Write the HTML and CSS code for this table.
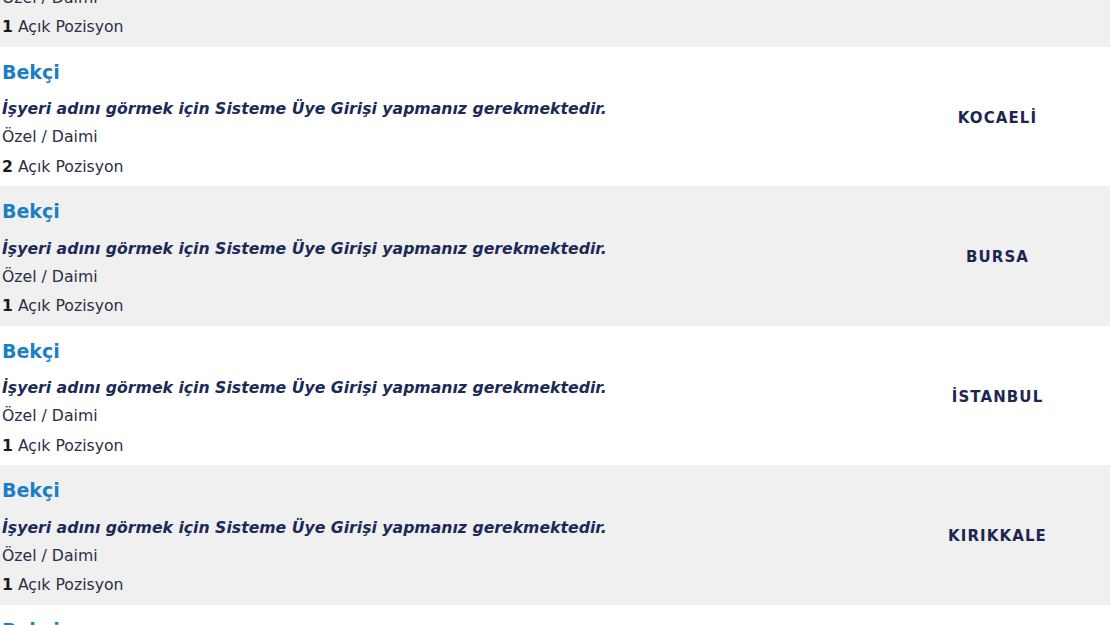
FILE: index.html
```html
<!DOCTYPE html>
<html lang="tr">
<head>
<meta charset="UTF-8">
<title>İş İlanları</title>
<link rel="stylesheet" href="styles.css">
</head>
<body>
<div class="job-list">
  <!-- One row per job post -->
  <div class="job-row gray">
    <div class="job-info">
      <a class="job-title" href="#">Bekçi</a>
      <div class="job-employer">İşyeri adını görmek için Sisteme Üye Girişi yapmanız gerekmektedir.</div>
      <div class="job-type">Özel / Daimi</div>
      <div class="job-count"><b>1</b> Açık Pozisyon</div>
    </div>
    <div class="job-city">SAKARYA</div>
  </div>
  <div class="job-row">
    <div class="job-info">
      <a class="job-title" href="#">Bekçi</a>
      <div class="job-employer">İşyeri adını görmek için Sisteme Üye Girişi yapmanız gerekmektedir.</div>
      <div class="job-type">Özel / Daimi</div>
      <div class="job-count"><b>2</b> Açık Pozisyon</div>
    </div>
    <div class="job-city">KOCAELİ</div>
  </div>
  <div class="job-row gray">
    <div class="job-info">
      <a class="job-title" href="#">Bekçi</a>
      <div class="job-employer">İşyeri adını görmek için Sisteme Üye Girişi yapmanız gerekmektedir.</div>
      <div class="job-type">Özel / Daimi</div>
      <div class="job-count"><b>1</b> Açık Pozisyon</div>
    </div>
    <div class="job-city">BURSA</div>
  </div>
  <div class="job-row">
    <div class="job-info">
      <a class="job-title" href="#">Bekçi</a>
      <div class="job-employer">İşyeri adını görmek için Sisteme Üye Girişi yapmanız gerekmektedir.</div>
      <div class="job-type">Özel / Daimi</div>
      <div class="job-count"><b>1</b> Açık Pozisyon</div>
    </div>
    <div class="job-city">İSTANBUL</div>
  </div>
  <div class="job-row gray">
    <div class="job-info">
      <a class="job-title" href="#">Bekçi</a>
      <div class="job-employer">İşyeri adını görmek için Sisteme Üye Girişi yapmanız gerekmektedir.</div>
      <div class="job-type">Özel / Daimi</div>
      <div class="job-count"><b>1</b> Açık Pozisyon</div>
    </div>
    <div class="job-city">KIRIKKALE</div>
  </div>
  <div class="job-row">
    <div class="job-info">
      <a class="job-title" href="#">Bekçi</a>
      <div class="job-employer">İşyeri adını görmek için Sisteme Üye Girişi yapmanız gerekmektedir.</div>
      <div class="job-type">Özel / Daimi</div>
      <div class="job-count"><b>1</b> Açık Pozisyon</div>
    </div>
    <div class="job-city">ANKARA</div>
  </div>
</div>
</body>
</html>
```

FILE: styles.css
```css
/* Page base */
body {
  margin: 0;
  font-family: "DejaVu Sans", Verdana, sans-serif;
  color: #2b2f45;
  background-color: #fff;
}

/* List is scrolled so the first row is cut off */
.job-list {
  margin-top: -92.75px;
}

/* Job row */
.job-row {
  display: flex;
  height: 139.5px;
  background-color: #fff;
}

.job-row.gray {
  background-color: #f0f0f0;
}

/* Left column with the post details */
.job-info {
  width: 885px;
  padding: 10px 0 0 2px;
  box-sizing: border-box;
}

.job-title {
  display: block;
  font-size: 19px;
  font-weight: bold;
  line-height: 30px;
  margin-bottom: 7.5px;
  color: #1b80c3;
  text-decoration: none;
}

.job-employer,
.job-type,
.job-count {
  font-size: 15.7px;
  line-height: 29.5px;
}

.job-employer {
  font-weight: bold;
  font-style: italic;
  color: #1b2a57;
}

.job-type {
  margin-top: -1.5px;
}

.job-count b {
  color: #1a1a1a;
}

/* Right column with the city */
.job-city {
  flex: 1;
  display: flex;
  align-items: center;
  justify-content: center;
  padding-top: 2px;
  font-size: 15px;
  font-weight: bold;
  letter-spacing: 1.1px;
  color: #1c2750;
}
```
